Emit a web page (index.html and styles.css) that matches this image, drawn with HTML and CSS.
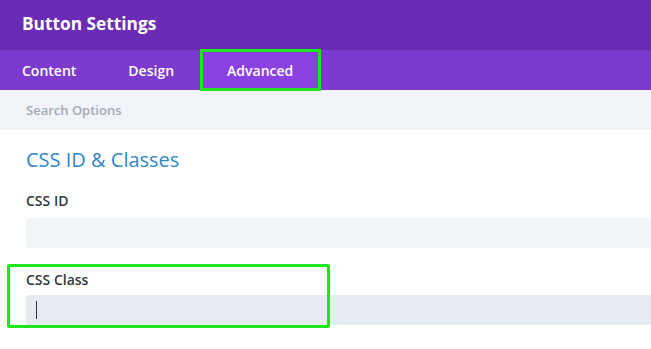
FILE: index.html
```html
<!DOCTYPE html>
<html lang="en">
<head>
    <meta charset="UTF-8">
    <meta name="viewport" content="width=device-width, initial-scale=1.0">
    <title>Button Settings</title>
    <link rel="stylesheet" href="styles.css">
</head>
<body>
    <div class="settings">
        <div class="header">
            <h1>Button Settings</h1>
        </div>
        <div class="tabs">
            <div class="tab first">Content</div>
            <div class="tab">Design</div>
            <div class="tab active">Advanced</div>
        </div>
        <div class="search">Search Options</div>

        <div class="group">
            <h2>CSS ID &amp; Classes</h2>
            <div class="field">
                <label>CSS ID</label>
                <div class="input"></div>
            </div>
            <div class="field highlight">
                <label>CSS Class</label>
                <div class="input focused"><span class="caret"></span></div>
                <div class="marker"></div>
            </div>
        </div>
    </div>
</body>
</html>
```

FILE: styles.css
```css
* {
    box-sizing: border-box;
    margin: 0;
    padding: 0;
}
body {
    font-family: "Open Sans", "Noto Sans", sans-serif;
    background-color: white;
    padding-bottom: 20px;
}
.header {
    height: 50px;
    background-color: #6a2cb5;
    padding-left: 22px;
    display: flex;
    align-items: center;
}
.header h1 {
    color: white;
    font-size: 17.3px;
    font-weight: 700;
    margin-top: -3px;
}
.tabs {
    height: 40px;
    background-color: #7d3ace;
    display: flex;
}
.tab {
    padding: 0 26px;
    color: white;
    font-size: 14px;
    font-weight: 600;
    display: flex;
    align-items: center;
}
.tab.first {
    padding-left: 22px;
}
.tab.active {
    margin-left: 1px;
    padding-right: 27px;
    background-color: #8a41e2;
    outline: 3px solid #1fe51f;
    outline-offset: -2px;
}
.search {
    height: 40px;
    background-color: #f1f4f8;
    color: #a3abb5;
    font-size: 13px;
    font-weight: 600;
    padding-left: 26px;
    display: flex;
    align-items: center;
}
.group {
    padding-left: 26px;
}
.group h2 {
    color: #2f87c8;
    font-size: 20px;
    font-weight: 400;
    line-height: 26px;
    margin-top: 17px;
}
.field {
    margin-top: 18px;
}
.field label {
    display: block;
    color: #32373c;
    font-size: 14px;
    font-weight: 600;
    line-height: 20px;
    margin-bottom: 7px;
}
.input {
    height: 30px;
    background-color: #f1f4f8;
    border-radius: 3px 0 0 3px;
    display: flex;
    align-items: center;
    padding-left: 10px;
}
.highlight {
    position: relative;
    margin-top: 22px;
}
.highlight label {
    margin-bottom: 5px;
}
.input.focused {
    background-color: #e6eaf1;
}
.caret {
    width: 1px;
    height: 18px;
    background-color: #333;
}
.marker {
    position: absolute;
    left: -19px;
    top: -6px;
    bottom: -3px;
    width: 323px;
    border: 3px solid #1fe51f;
    border-radius: 2px;
}
```
